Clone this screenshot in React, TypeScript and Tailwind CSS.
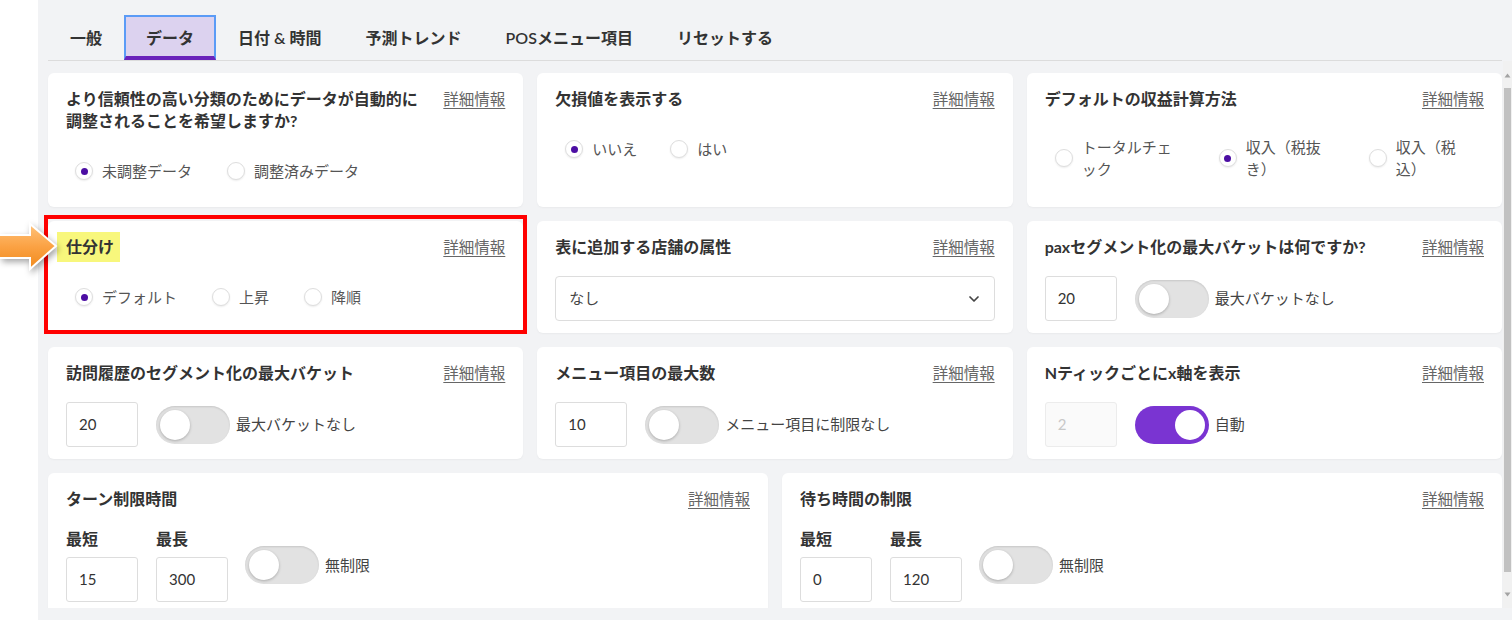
import * as React from "react"
import { ChevronDown } from "lucide-react"

const FONT = "font-['Lato','Noto_Sans_CJK_JP',sans-serif]"

const tabs = ["一般", "データ", "日付 & 時間", "予測トレンド", "POSメニュー項目", "リセットする"]

function Radio({ label, checked, labelClass = "" }: { label: string; checked?: boolean; labelClass?: string }) {
  return (
    <label className="flex items-center gap-[9px]">
      <span className="flex h-[18px] w-[18px] shrink-0 items-center justify-center rounded-full border border-[#dedede] bg-white shadow-[0_1px_2px_rgba(0,0,0,0.08)]">
        {checked && <span className="h-[7px] w-[7px] rounded-full bg-[#4c0ea3]" />}
      </span>
      <span className={`text-[15px] leading-[22px] text-[#555] ${labelClass}`}>{label}</span>
    </label>
  )
}

function Toggle({ on }: { on?: boolean }) {
  if (on) {
    return (
      <span className="flex h-[38px] w-[74px] shrink-0 items-center justify-end rounded-full bg-[#7a34d2] px-[4px]">
        <span className="h-[30px] w-[30px] rounded-full bg-white" />
      </span>
    )
  }
  return (
    <span className="flex h-[38px] w-[74px] shrink-0 items-center rounded-full bg-[#e2e2e2] px-[4px] shadow-[inset_0_1px_2px_rgba(0,0,0,0.12)]">
      <span className="h-[30px] w-[30px] rounded-full bg-white shadow-[0_1px_3px_rgba(0,0,0,0.25)]" />
    </span>
  )
}

function NumBox({ value, disabled }: { value: string; disabled?: boolean }) {
  return (
    <div
      className={`flex h-[45px] w-[72px] shrink-0 items-center rounded-[3px] border px-[12px] text-[15px] ${
        disabled ? "border-[#ececec] bg-[#fafafa] text-[#c8c8c8]" : "border-[#dddddd] bg-white text-[#333]"
      }`}
    >
      {value}
    </div>
  )
}

function Head({ title }: { title: React.ReactNode }) {
  return (
    <div className="flex items-start justify-between gap-[20px]">
      <h3 className="text-[16px] font-bold leading-[22px] text-[#333]">{title}</h3>
      <a className="shrink-0 cursor-pointer text-[15.5px] leading-[22px] text-[#666] underline underline-offset-[3px]">
        詳細情報
      </a>
    </div>
  )
}

function Card({ children, className = "" }: { children: React.ReactNode; className?: string }) {
  return <div className={`rounded-[6px] bg-white px-[18px] pt-[15px] shadow-[0_1px_2px_rgba(0,0,0,0.04)] ${className}`}>{children}</div>
}

function BucketRow({ value, label, on, disabled }: { value: string; label: string; on?: boolean; disabled?: boolean }) {
  return (
    <div className="mt-[18px] flex items-center">
      <NumBox value={value} disabled={disabled} />
      <span className="ml-[18px]">
        <Toggle on={on} />
      </span>
      <span className="ml-[6px] text-[15px] text-[#444]">{label}</span>
    </div>
  )
}

function RangeCard({ title, min, max }: { title: string; min: string; max: string }) {
  return (
    <Card className="h-[150px]">
      <Head title={title} />
      <div className="mt-[18px] flex items-center">
        <div className="flex flex-col gap-[7px]">
          <span className="text-[16px] font-bold leading-[22px] text-[#333]">最短</span>
          <NumBox value={min} />
        </div>
        <div className="ml-[18px] flex flex-col gap-[7px]">
          <span className="text-[16px] font-bold leading-[22px] text-[#333]">最長</span>
          <NumBox value={max} />
        </div>
        <span className="ml-[17px]">
          <Toggle />
        </span>
        <span className="ml-[6px] text-[15px] text-[#444]">無制限</span>
      </div>
    </Card>
  )
}

export default function App() {
  return (
    <div className={`relative flex h-[620px] w-[1512px] bg-white ${FONT}`}>
      <div className="w-[38px] shrink-0 bg-white" />

      <div className="flex flex-1 flex-col bg-[#f2f3f5]">
        {/* tabs */}
        <div className="shrink-0 pl-[10px] pr-[10px] pt-[15px]">
          <div className="flex h-[46px] border-b border-[#dcdcdc]">
            {tabs.map((t, i) =>
              i === 1 ? (
                <div
                  key={t}
                  className="flex h-[45px] items-center border-2 border-b-[4px] border-[#5b9bf6] border-b-[#6a22bb] bg-[#dcd2ef] px-[20px] pt-[2px] text-[16px] font-semibold text-[#333]"
                >
                  {t}
                </div>
              ) : (
                <div key={t} className="flex h-[45px] items-center px-[22px] text-[16px] font-semibold text-[#333]">
                  {t}
                </div>
              )
            )}
          </div>
        </div>

        {/* content */}
        <div className="flex h-[547px] shrink-0 overflow-hidden">
          <div className="flex flex-1 flex-col gap-[14px] pl-[10px] pr-[1px] pt-[12px]">
            <div className="grid h-[134px] shrink-0 grid-cols-3 gap-[14px]">
              <Card>
                <Head title="より信頼性の高い分類のためにデータが自動的に調整されることを希望しますか?" />
                <div className="mt-[28px] flex items-center gap-[35px] pl-[9px]">
                  <Radio label="未調整データ" checked />
                  <Radio label="調整済みデータ" />
                </div>
              </Card>
              <Card>
                <Head title="欠損値を表示する" />
                <div className="mt-[28px] flex items-center gap-[33px] pl-[10px]">
                  <Radio label="いいえ" checked />
                  <Radio label="はい" />
                </div>
              </Card>
              <Card>
                <Head title="デフォルトの収益計算方法" />
                <div className="mt-[26px] flex items-center gap-[45px] pl-[10px]">
                  <Radio label="トータルチェック" labelClass="w-[92px]" />
                  <Radio label="収入（税抜き）" checked labelClass="w-[78px]" />
                  <Radio label="収入（税込）" labelClass="w-[64px]" />
                </div>
              </Card>
            </div>

            <div className="grid h-[112px] shrink-0 grid-cols-3 gap-[14px]">
              <div className="relative">
                <Card className="h-full">
                  <Head
                    title={
                      <span className="-my-[4px] -ml-[9px] inline-block bg-[#f8f77c] py-[4px] pl-[9px] pr-[6px]">仕分け</span>
                    }
                  />
                  <div className="mt-[28px] flex items-center gap-[35px] pl-[9px]">
                    <Radio label="デフォルト" checked />
                    <Radio label="上昇" />
                    <Radio label="降順" />
                  </div>
                </Card>
                <div className="pointer-events-none absolute -left-[4px] -right-[4px] -top-[6px] bottom-[-1px] border-[4.5px] border-[#ff0000]" />
              </div>
              <Card>
                <Head title="表に追加する店舗の属性" />
                <div className="mt-[18px] flex h-[45px] items-center justify-between rounded-[4px] border border-[#dddddd] pl-[13px] pr-[12px] text-[15px] text-[#444]">
                  <span>なし</span>
                  <ChevronDown size={16} strokeWidth={2.6} className="text-[#444]" />
                </div>
              </Card>
              <Card>
                <Head title="paxセグメント化の最大バケットは何ですか?" />
                <BucketRow value="20" label="最大バケットなし" />
              </Card>
            </div>

            <div className="grid h-[112px] shrink-0 grid-cols-3 gap-[14px]">
              <Card>
                <Head title="訪問履歴のセグメント化の最大バケット" />
                <BucketRow value="20" label="最大バケットなし" />
              </Card>
              <Card>
                <Head title="メニュー項目の最大数" />
                <BucketRow value="10" label="メニュー項目に制限なし" />
              </Card>
              <Card>
                <Head title="Nティックごとにx軸を表示" />
                <BucketRow value="2" label="自動" on disabled />
              </Card>
            </div>

            <div className="grid shrink-0 grid-cols-2 gap-[14px]">
              <RangeCard title="ターン制限時間" min="15" max="300" />
              <RangeCard title="待ち時間の制限" min="0" max="120" />
            </div>
          </div>

          {/* scrollbar */}
          <div className="flex w-[9px] shrink-0 flex-col items-center bg-[#f1f1f1]">
            <svg width="7" height="5" viewBox="0 0 7 5" className="mt-[12px]">
              <path d="M3.5 0.5 L6.5 4.5 H0.5 Z" fill="#a3a3a3" />
            </svg>
            <div className="mt-[10px] h-[484px] w-[7px] bg-[#c1c1c1]" />
            <svg width="7" height="5" viewBox="0 0 7 5" className="mt-[20px]">
              <path d="M0.5 0.5 H6.5 L3.5 4.5 Z" fill="#a3a3a3" />
            </svg>
          </div>
        </div>
      </div>

      {/* pointer arrow */}
      <svg
        width="60"
        height="54"
        viewBox="0 0 60 54"
        className="absolute left-0 top-[221px] drop-shadow-[2px_3px_3px_rgba(0,0,0,0.35)]"
      >
        <defs>
          <linearGradient id="arr" x1="0" y1="0" x2="0" y2="1">
            <stop offset="0" stopColor="#ffc27a" />
            <stop offset="0.5" stopColor="#fba244" />
            <stop offset="1" stopColor="#f08a1c" />
          </linearGradient>
        </defs>
        <path
          d="M-2 14 H30 V3 L56 25 L30 48 V37 H-2 Z"
          fill="url(#arr)"
          stroke="#ffffff"
          strokeWidth="2"
          strokeLinejoin="miter"
        />
      </svg>
    </div>
  )
}
